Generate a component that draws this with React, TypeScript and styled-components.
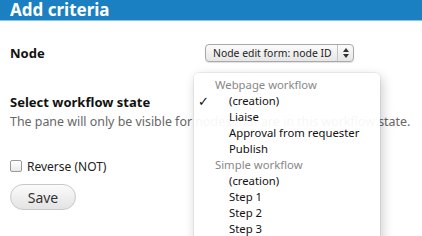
import React from "react";
import styled, { createGlobalStyle } from "styled-components";

const Global = createGlobalStyle`
  html, body { margin: 0; padding: 0; background: #fff; }
  body { font-family: "Noto Sans", "DejaVu Sans", sans-serif; color: #222; overflow: hidden; }
  * { box-sizing: border-box; }
`;

const Page = styled.div`
  position: relative;
  width: 422px;
  height: 236px;
  overflow: hidden;
`;

const Header = styled.div`
  height: 21px;
  background: #1a80c1;
  border-bottom: 1px solid #8cc3e6;
  color: #fff;
  font-weight: 700;
  font-size: 17px;
  line-height: 19px;
  padding-left: 10px;
  white-space: nowrap;
`;

const Body = styled.div`
  padding: 0 10px;
  display: flex;
  flex-direction: column;
`;

const FieldRow = styled.div<{ $top: number }>`
  display: flex;
  align-items: center;
  height: 18px;
  margin-top: ${(p) => p.$top}px;
`;

const Label = styled.div`
  width: 195px;
  font-size: 13px;
  font-weight: 700;
  color: #111;
`;

const Select = styled.div<{ $faded?: boolean; $width: number }>`
  width: ${(p) => p.$width}px;
  height: 18px;
  border-radius: 4px;
  border: 1px solid ${(p) => (p.$faded ? "#eceef2" : "#a9a9a9")};
  background: ${(p) =>
    p.$faded ? "#f1f3f7" : "linear-gradient(#fbfbfb, #e6e6e6)"};
  display: flex;
  align-items: center;
  font-size: 10.4px;
  color: ${(p) => (p.$faded ? "transparent" : "#222")};
  box-shadow: ${(p) => (p.$faded ? "none" : "0 1px 1px rgba(0,0,0,0.12)")};
`;

const SelectText = styled.div`
  flex: 1;
  padding-left: 7px;
  white-space: nowrap;
`;

const SelectArrows = styled.div`
  width: 16px;
  height: 100%;
  border-left: 1px solid #c4c4c4;
  display: flex;
  align-items: center;
  justify-content: center;
`;

const Description = styled.div`
  margin-top: 3px;
  font-size: 12.4px;
  line-height: 16px;
  color: #666;
  white-space: nowrap;
`;

const CheckRow = styled.div`
  margin-top: 28px;
  display: flex;
  align-items: center;
  gap: 5px;
  height: 16px;
  font-size: 12px;
  color: #222;
`;

const Box = styled.div`
  width: 12px;
  height: 12px;
  border: 1px solid #9a9a9a;
  border-radius: 2px;
  background: linear-gradient(#fff, #e9e9e9);
`;

const SaveButton = styled.div`
  margin-top: 10px;
  width: 66px;
  height: 26px;
  border-radius: 13px;
  border: 1px solid #c8c8c8;
  background: linear-gradient(#fbfbfb, #e3e3e3);
  display: flex;
  align-items: center;
  justify-content: center;
  font-size: 14px;
  color: #333;
`;

const Menu = styled.div`
  position: absolute;
  left: 194px;
  top: 73px;
  width: 186px;
  height: 180px;
  padding-top: 4px;
  background: rgba(255, 255, 255, 0.94);
  border-radius: 5px;
  box-shadow: 0 0 0 1px rgba(0, 0, 0, 0.05), 2px 4px 12px rgba(0, 0, 0, 0.22);
`;

const MenuItem = styled.div<{ $group?: boolean }>`
  position: relative;
  height: 16px;
  line-height: 16px;
  font-size: 11.3px;
  padding-left: ${(p) => (p.$group ? 21 : 35)}px;
  color: ${(p) => (p.$group ? "#888" : "#111")};
  white-space: nowrap;
`;

const Check = styled.span`
  position: absolute;
  left: 4px;
  top: 0;
  font-size: 13px;
  font-weight: 700;
  color: #111;
`;

const menu: { text: string; group?: boolean; checked?: boolean }[] = [
  { text: "Webpage workflow", group: true },
  { text: "(creation)", checked: true },
  { text: "Liaise" },
  { text: "Approval from requester" },
  { text: "Publish" },
  { text: "Simple workflow", group: true },
  { text: "(creation)" },
  { text: "Step 1" },
  { text: "Step 2" },
  { text: "Step 3" },
];

export default function App() {
  return (
    <Page>
      <Global />
      <Header>Add criteria</Header>
      <Body>
        <FieldRow $top={23}>
          <Label>Node</Label>
          <Select $width={149}>
            <SelectText>Node edit form: node ID</SelectText>
            <SelectArrows>
              <svg width="6" height="10" viewBox="0 0 6 10">
                <path d="M0 4 L3 0 L6 4 Z M0 6 L3 10 L6 6 Z" fill="#333" />
              </svg>
            </SelectArrows>
          </Select>
        </FieldRow>
        <FieldRow $top={31}>
          <Label>Select workflow state</Label>
          <Select $faded $width={168} />
        </FieldRow>
        <Description>
          The pane will only be visible for nodes that are in this workflow state.
        </Description>
        <CheckRow>
          <Box />
          Reverse (NOT)
        </CheckRow>
        <SaveButton>Save</SaveButton>
      </Body>
      <Menu>
        {menu.map((m, i) => (
          <MenuItem key={i} $group={m.group}>
            {m.checked && <Check>✓</Check>}
            {m.text}
          </MenuItem>
        ))}
      </Menu>
    </Page>
  );
}
